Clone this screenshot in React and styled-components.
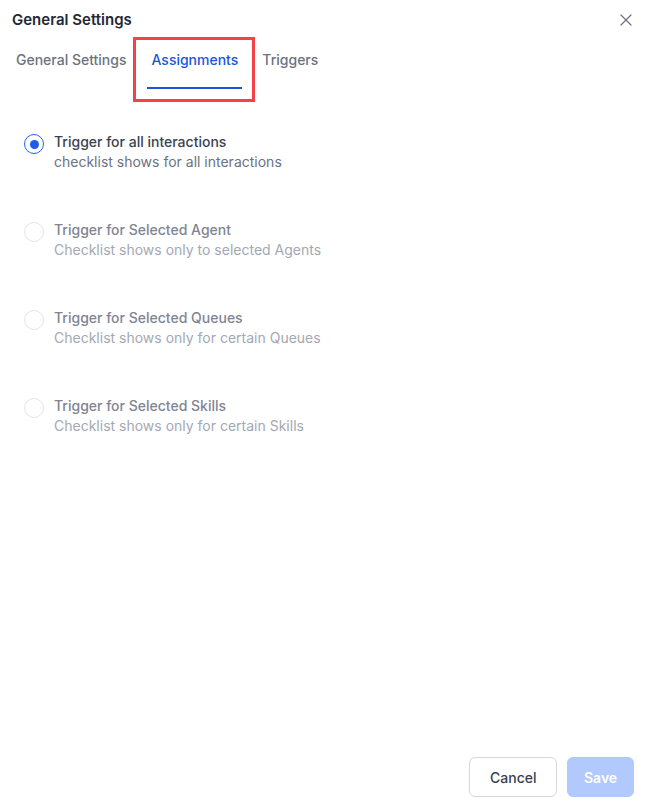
import React, { useState } from 'react'
import styled, { createGlobalStyle } from 'styled-components'

const GlobalStyle = createGlobalStyle`
    html, body {
        margin: 0;
        padding: 0;
        background: #ffffff;
        font-family: Inter, "Noto Sans", sans-serif;
    }
    * { box-sizing: border-box; }
`

const Panel = styled.div`
    width: 648px;
    height: 806px;
    display: flex;
    flex-direction: column;
    background: #ffffff;
`

const Header = styled.div`
    display: flex;
    align-items: center;
    justify-content: space-between;
    padding: 10px 16px 0 12px;
`

const Title = styled.div`
    font-size: 15px;
    line-height: 20px;
    font-weight: 600;
    color: #1f2937;
`

const CloseButton = styled.button`
    border: none;
    background: none;
    padding: 0;
    width: 12px;
    height: 12px;
    display: flex;
    cursor: pointer;
`

const TabRow = styled.div`
    display: flex;
    align-items: flex-start;
    margin-top: 7px;
    padding-left: 12px;
    gap: 3px;
`

const TabSlot = styled.div`
    border: 3px solid ${props => props.$marked ? '#f44246' : 'transparent'};
    border-left-width: ${props => props.$marked ? '3px' : '0'};
    border-right-width: ${props => props.$marked ? '3px' : '0'};
    padding: ${props => props.$marked ? '10px 10px 10px 11px' : '10px 0'};
`

const Tab = styled.button`
    display: block;
    border: none;
    background: none;
    padding: 0 4px 17px;
    font-family: inherit;
    font-size: 14px;
    line-height: 20px;
    font-weight: 500;
    color: ${props => props.$active ? '#1a56db' : '#6b7280'};
    border-bottom: 2px solid ${props => props.$active ? '#1a56db' : 'transparent'};
    cursor: pointer;
`

const OptionList = styled.div`
    display: flex;
    flex-direction: column;
    gap: 48px;
    padding: 30px 24px 0;
`

const Option = styled.label`
    display: flex;
    align-items: flex-start;
    gap: 10px;
    cursor: ${props => props.$disabled ? 'default' : 'pointer'};
`

const Radio = styled.span`
    flex: none;
    width: 20px;
    height: 20px;
    margin-top: 2px;
    border-radius: 50%;
    border: ${props => props.$checked ? '1.5px solid #2563eb' : '1px solid #e2e4e9'};
    display: flex;
    align-items: center;
    justify-content: center;
    &::after {
        content: '';
        display: ${props => props.$checked ? 'block' : 'none'};
        width: 9px;
        height: 9px;
        border-radius: 50%;
        background: #1d5ce6;
    }
`

const OptionText = styled.div`
    display: flex;
    flex-direction: column;
`

const OptionLabel = styled.span`
    font-size: 14px;
    line-height: 20px;
    font-weight: 500;
    color: ${props => props.$disabled ? '#7f8592' : '#3b4250'};
`

const OptionHint = styled.span`
    font-size: 14px;
    line-height: 20px;
    color: ${props => props.$disabled ? '#a3a8b3' : '#6b7280'};
`

const Footer = styled.div`
    margin-top: auto;
    display: flex;
    justify-content: flex-end;
    gap: 10px;
    padding: 0 14px 9px 0;
`

const Button = styled.button`
    height: 40px;
    padding: ${props => props.$primary ? '0 16px' : '0 20px'};
    border-radius: 6px;
    font-family: inherit;
    font-size: 14px;
    cursor: pointer;
    border: 1px solid ${props => props.$primary ? '#b1c9fc' : '#d5d8de'};
    background: ${props => props.$primary ? '#b1c9fc' : '#ffffff'};
    color: ${props => props.$primary ? '#ffffff' : '#374151'};
    font-weight: ${props => props.$primary ? 600 : 500};
    width: ${props => props.$primary ? '67px' : '88px'};
`

const tabs = ['General Settings', 'Assignments', 'Triggers']

const options = [
    { label: 'Trigger for all interactions', hint: 'checklist shows for all interactions', disabled: false },
    { label: 'Trigger for Selected Agent', hint: 'Checklist shows only to selected Agents', disabled: true },
    { label: 'Trigger for Selected Queues', hint: 'Checklist shows only for certain Queues', disabled: true },
    { label: 'Trigger for Selected Skills', hint: 'Checklist shows only for certain Skills', disabled: true },
]

const App = () => {
    const [activeTab, setActiveTab] = useState('Assignments')
    const [selected, setSelected] = useState(0)

    return (
        <Panel>
            <GlobalStyle />
            <Header>
                <Title>General Settings</Title>
                <CloseButton aria-label='Close'>
                    <svg width='12' height='12' viewBox='0 0 12 12'>
                        <path d='M1 1L11 11M11 1L1 11' stroke='#6b7280' strokeWidth='1.2' strokeLinecap='round' />
                    </svg>
                </CloseButton>
            </Header>
            <TabRow>
                {tabs.map(tab => (
                    <TabSlot key={tab} $marked={tab === 'Assignments'}>
                        <Tab $active={tab === activeTab} onClick={() => setActiveTab(tab)}>{tab}</Tab>
                    </TabSlot>
                ))}
            </TabRow>
            <OptionList>
                {options.map((opt, i) => (
                    <Option key={opt.label} $disabled={opt.disabled} onClick={() => !opt.disabled && setSelected(i)}>
                        <Radio $checked={selected === i} />
                        <OptionText>
                            <OptionLabel $disabled={opt.disabled}>{opt.label}</OptionLabel>
                            <OptionHint $disabled={opt.disabled}>{opt.hint}</OptionHint>
                        </OptionText>
                    </Option>
                ))}
            </OptionList>
            <Footer>
                <Button>Cancel</Button>
                <Button $primary disabled>Save</Button>
            </Footer>
        </Panel>
    )
}

export default App
